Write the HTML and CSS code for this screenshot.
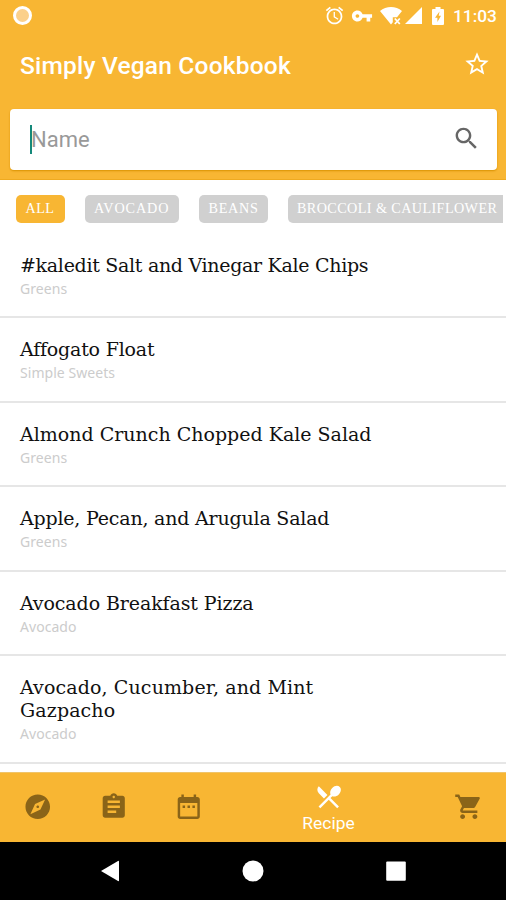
FILE: index.html
```html
<!DOCTYPE html>
<html lang="en">
<head>
<meta charset="utf-8">
<title>Simply Vegan Cookbook</title>
<link rel="stylesheet" href="styles.css">
</head>
<body>
<div class="screen">
  <header class="top">
    <div class="status">
      <span class="record"></span>
      <svg class="s-alarm" viewBox="0 0 24 24"><path d="M22 5.720l-4.600-3.860-1.290 1.530 4.600 3.860L22 5.720zM7.880 3.390L6.600 1.860 2 5.710l1.290 1.530 4.590-3.850zM12.500 8H11v6l4.750 2.850.75-1.230-4-2.370V8zM12 4c-4.970 0-9 4.030-9 9s4.020 9 9 9c4.970 0 9-4.030 9-9s-4.030-9-9-9zm0 16c-3.870 0-7-3.130-7-7s3.130-7 7-7 7 3.130 7 7-3.130 7-7 7z"/></svg>
      <svg class="s-key" viewBox="0 0 24 24"><path d="M12.650 10C11.830 7.670 9.610 6 7 6c-3.310 0-6 2.690-6 6s2.690 6 6 6c2.610 0 4.830-1.670 5.650-4H17v4h4v-4h2v-4H12.650zM7 14c-1.100 0-2-.9-2-2s.9-2 2-2 2 .9 2 2-.9 2-2 2z"/></svg>
      <svg class="s-wifi" viewBox="0 0 23 18"><path d="M0 4C6-1.300 16-1.300 22 4l-5 6.200h-4.200v5L11 17.500z"/><path d="M14.800 11.500l5 5.500M19.800 11.500l-5 5.500" fill="none" stroke="#fff" stroke-width="1.800"/></svg>
      <svg class="s-signal" viewBox="0 0 17 17"><path d="M0 17H17V0z"/></svg>
      <svg class="s-battery" viewBox="0 0 12 18"><path fill-rule="evenodd" d="M3.500 0h5v2H11q1 0 1 1v14q0 1-1 1H1q-1 0-1-1V3q0-1 1-1h2.500zM7.500 4.500L3 10.800h2.400v4.200L9 8.700H6.700z"/></svg>
      <span class="clock">11:03</span>
    </div>
    <div class="appbar">
      <h1>Simply Vegan Cookbook</h1>
      <svg class="star" viewBox="0 0 24 24"><path d="M22 9.240l-7.190-.62L12 2 9.190 8.630 2 9.240l5.460 4.730L5.820 21 12 17.270 18.180 21l-1.630-7.030L22 9.240zM12 15.400l-3.760 2.270 1-4.280-3.320-2.880 4.380-.38L12 6.100l1.710 4.040 4.380.38-3.320 2.880 1 4.280L12 15.400z"/></svg>
    </div>
    <div class="search">
      <span class="caret"></span><span class="hint">Name</span>
      <svg class="lens" viewBox="0 0 24 24"><path d="M15.500 14h-.79l-.28-.27C15.410 12.590 16 11.110 16 9.500 16 5.910 13.090 3 9.500 3S3 5.910 3 9.500 5.910 16 9.500 16c1.610 0 3.090-.59 4.230-1.570l.27.28v.79l5 4.990L20.490 19l-4.990-5zm-6 0C7.010 14 5 11.990 5 9.500S7.010 5 9.500 5 14 7.010 14 9.500 11.990 14 9.500 14z"/></svg>
    </div>
  </header>
  <nav class="chips">
    <span class="chip chip-all on">ALL</span>
    <span class="chip chip-avocado">AVOCADO</span>
    <span class="chip chip-beans">BEANS</span>
    <span class="chip chip-broccoli">BROCCOLI &amp; CAULIFLOWER</span>
  </nav>
  <main class="list">
    <article class="row"><h2 class="tighter">#kaledit Salt and Vinegar Kale Chips</h2><p>Greens</p></article>
    <article class="row"><h2 class="tight">Affogato Float</h2><p>Simple Sweets</p></article>
    <article class="row"><h2>Almond Crunch Chopped Kale Salad</h2><p>Greens</p></article>
    <article class="row"><h2 class="tight">Apple, Pecan, and Arugula Salad</h2><p>Greens</p></article>
    <article class="row"><h2 class="snug">Avocado Breakfast Pizza</h2><p>Avocado</p></article>
    <article class="row tall"><h2 class="loose">Avocado, Cucumber, and Mint<br>Gazpacho</h2><p>Avocado</p></article>
  </main>
  <nav class="tabs">
    <a class="tab"><svg viewBox="0 0 24 24"><path d="M12 10.900c-.61 0-1.100.49-1.100 1.100s.49 1.100 1.100 1.100c.61 0 1.100-.49 1.100-1.100s-.49-1.100-1.100-1.100zM12 2C6.480 2 2 6.480 2 12s4.480 10 10 10 10-4.480 10-10S17.520 2 12 2zm2.190 12.190L6 18l3.810-8.190L18 6l-3.810 8.190z"/></svg></a>
    <a class="tab"><svg viewBox="0 0 24 24"><path d="M19 3h-4.180C14.400 1.840 13.300 1 12 1c-1.300 0-2.400.84-2.820 2H5c-1.100 0-2 .9-2 2v14c0 1.100.9 2 2 2h14c1.100 0 2-.9 2-2V5c0-1.100-.9-2-2-2zm-7 0c.55 0 1 .45 1 1s-.45 1-1 1-1-.45-1-1 .45-1 1-1zm2 14H7v-2h7v2zm3-4H7v-2h10v2zm0-4H7V7h10v2z"/></svg></a>
    <a class="tab"><svg viewBox="0 0 24 24"><path d="M9 11H7v2h2v-2zm4 0h-2v2h2v-2zm4 0h-2v2h2v-2zm2-7h-1V2h-2v2H8V2H6v2H5c-1.110 0-1.990.9-1.990 2L3 20c0 1.100.89 2 2 2h14c1.100 0 2-.9 2-2V6c0-1.100-.9-2-2-2zm0 16H5V9h14v11z"/></svg></a>
    <a class="tab active"><svg viewBox="0 0 24 24"><path d="M8.100 13.340l2.830-2.830L3.910 3.500c-1.560 1.560-1.560 4.090 0 5.660l4.190 4.180zm6.780-1.810c1.530.71 3.680.21 5.270-1.380 1.910-1.910 2.280-4.650.81-6.120-1.460-1.460-4.200-1.100-6.120.81-1.590 1.590-2.090 3.740-1.380 5.270L3.700 19.870l1.410 1.410L12 14.410l6.880 6.880 1.410-1.410L13.410 13l1.470-1.470z"/></svg><span>Recipe</span></a>
    <a class="tab"><svg viewBox="0 0 24 24"><path d="M7 18c-1.100 0-1.990.9-1.990 2S5.900 22 7 22s2-.9 2-2-.9-2-2-2zM1 2v2h2l3.600 7.590-1.350 2.450c-.16.28-.25.61-.25.96 0 1.100.9 2 2 2h12v-2H7.420c-.14 0-.25-.11-.25-.25l.03-.12.9-1.630h7.450c.75 0 1.410-.41 1.750-1.030l3.580-6.490c.08-.14.12-.31.12-.48 0-.55-.45-1-1-1H5.210l-.94-2H1zm16 16c-1.100 0-1.990.9-1.990 2s.89 2 1.990 2 2-.9 2-2-.9-2-2-2z"/></svg></a>
  </nav>
  <footer class="system">
    <svg viewBox="0 0 20 22"><path d="M1 11L18 .9q1-.4 1 .6v19q0 1-1 .6z"/></svg>
    <svg viewBox="0 0 22 22"><circle cx="11" cy="11" r="10.500"/></svg>
    <svg viewBox="0 0 22 22"><rect x="1.200" y="1.500" width="19.600" height="19.300" rx="1"/></svg>
  </footer>
</div>
</body>
</html>
```

FILE: styles.css
```css
* { box-sizing: border-box; }
body { margin: 0; background: #fff; font-family: Roboto, "Liberation Sans", sans-serif; }
h1, h2, p { margin: 0; font-weight: 400; }
svg { display: block; flex: none; }
.screen { width: 506px; height: 900px; display: flex; flex-direction: column; overflow: hidden; }

.top { height: 180px; flex: none; background: #f8b633; border-bottom: 1px solid #efaa20; display: flex; flex-direction: column; }
.status { height: 31px; display: flex; align-items: center; padding: 0 10px 0 13px; fill: #fff; }
.record { width: 19px; height: 19px; border: 3.500px solid #fff; border-radius: 50%; background: #fbd08a; margin-right: auto; }
.s-alarm { width: 21px; height: 21px; margin-right: 6px; }
.s-key { width: 22px; height: 22px; margin-right: 7px; }
.s-wifi { width: 23px; height: 18px; margin-right: 2px; }
.s-signal { width: 17px; height: 17px; margin-right: 10px; }
.s-battery { width: 12px; height: 18px; margin-right: 9px; }
.clock { width: 43px; color: #fff; font-size: 17.300px; font-weight: 500; line-height: 32px; white-space: nowrap; }
.appbar { height: 70px; display: flex; align-items: center; justify-content: space-between; padding: 0 15px 2px 20px; }
.appbar h1 { font-size: 24.500px; letter-spacing: .2px; font-weight: 500; color: #fff; white-space: nowrap; }
.star { width: 28px; height: 28px; margin-top: -2px; fill: #fff; }
.search { height: 61px; margin: 8px 9px 0 10px; padding: 0 16px 0 20px; background: #fff; border-radius: 4px; box-shadow: 0 1px 2px #d99100; display: flex; align-items: center; }
.caret { width: 2px; height: 29px; background: #14897a; margin-right: -1px; }
.hint { font-size: 22px; color: #999; margin-right: auto; }
.lens { width: 29px; height: 29px; margin-top: -2px; fill: #666; }

.chips { height: 54px; flex: none; display: flex; gap: 20px; padding: 15px 4px 0 16px; }
.chip { height: 27.500px; flex: none; padding-left: 9.500px; border-radius: 5px; background: #d0d0d0; color: #fff; font: 14.200px/27px "Liberation Serif", serif; letter-spacing: .4px; white-space: nowrap; }
.on { background: #f8b633; }
.chip-all { width: 48.500px; }
.chip-avocado { width: 94.500px; letter-spacing: .9px; }
.chip-beans { width: 68.500px; letter-spacing: .7px; }
.chip-broccoli { width: 215px; border-radius: 5px 0 0 5px; }

.list { height: 538px; flex: none; overflow: hidden; }
.row { height: 84.400px; padding: 20px 20px 0; border-bottom: 2px solid #e6e6e6; }
.row.tall { height: 108px; }
.row h2 { font: 19px/23.500px "DejaVu Serif", serif; color: #111; white-space: nowrap; }
.row h2.tighter { letter-spacing: -.3px; }
.row h2.tight { letter-spacing: -.2px; }
.row h2.snug { letter-spacing: -.1px; }
.row h2.loose { letter-spacing: .12px; }
.row p { font: 14px/20px "Noto Sans", sans-serif; letter-spacing: .05px; color: #ccc; margin-top: 1.500px; }

.tabs { height: 70px; flex: none; background: #f8b633; border-top: 1px solid #f0c46a; display: flex; }
.tab { width: 75.500px; display: flex; flex-direction: column; align-items: center; justify-content: center; padding-bottom: 1px; }
.tab svg { width: 29.500px; height: 29.500px; fill: #8a6418; }
.tab.active { flex: 1; justify-content: flex-start; padding-top: 9px; }
.tab.active svg { fill: #fff; margin-left: 1px; }
.tab span { font-size: 17.400px; line-height: 22px; color: #fff; }

.system { height: 58px; flex: none; background: #000; display: flex; justify-content: center; gap: 121px; align-items: center; fill: #fff; }
.system svg { width: 22px; height: 22px; }
```
